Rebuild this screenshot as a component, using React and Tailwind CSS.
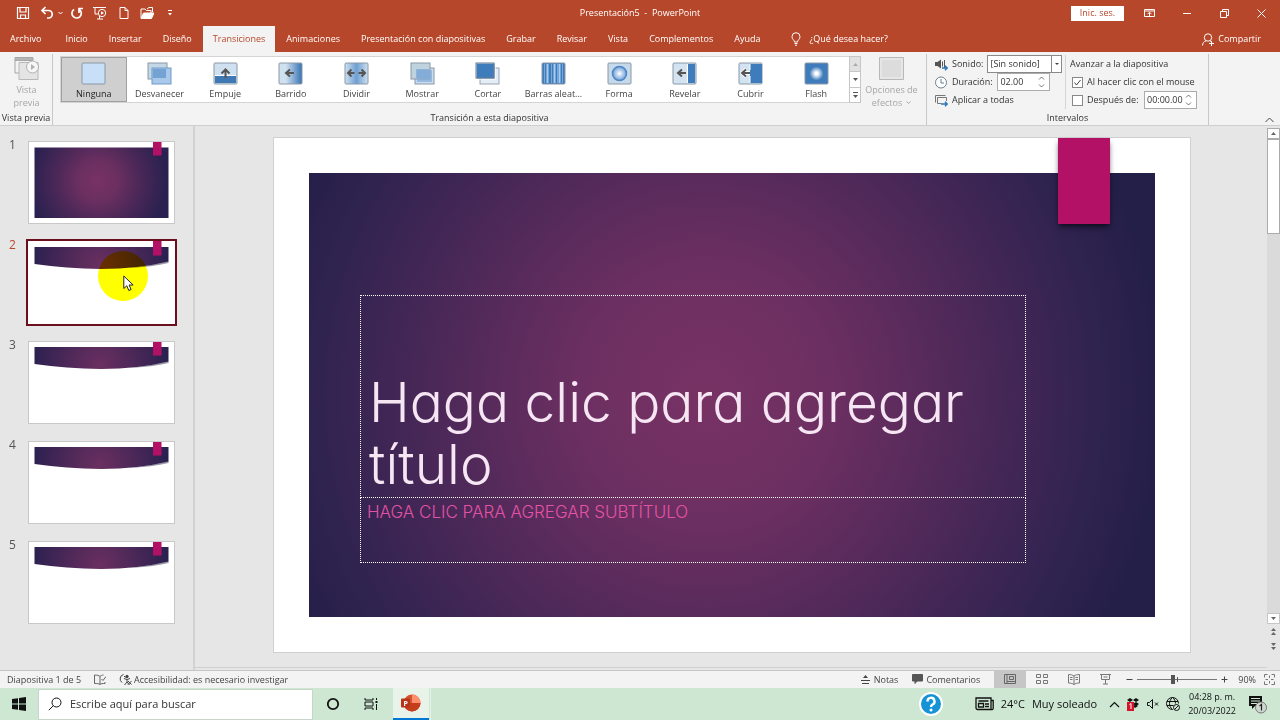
import { useState } from "react";

const tabs = [
  "Archivo", "Inicio", "Insertar", "Diseño", "Transiciones", "Animaciones",
  "Presentación con diapositivas", "Grabar", "Revisar", "Vista", "Complementos", "Ayuda",
];

const transitions = [
  "Ninguna", "Desvanecer", "Empuje", "Barrido", "Dividir", "Mostrar",
  "Cortar", "Barras aleat...", "Forma", "Revelar", "Cubrir", "Flash",
];

const Icon = ({ w, h, children, className = "" }) => (
  <svg width={w} height={h} viewBox={`0 0 ${w} ${h}`} fill="none" stroke="currentColor" className={`shrink-0 ${className}`} aria-hidden="true">
    {children}
  </svg>
);

const Frame = ({ fill }) => <rect x="1" y="1" width="23" height="21" rx="1" fill={fill} stroke="#8a98a6" />;
const ArrowLeft = ({ x = 0 }) => <path d={`M${x + 16} 11H${x + 9}M${x + 12} 7.500l-4 3.500 4 3.500`} stroke="#555" strokeWidth="2" />;

const TransitionIcon = ({ name }) => {
  switch (name) {
    case "Ninguna":
      return <Frame fill="#c8e0f7" />;
    case "Desvanecer":
      return (
        <>
          <rect x="1" y="1" width="19" height="16" fill="#c3d8e4" stroke="#8a98a6" />
          <rect x="5" y="6" width="19" height="16" fill="#a9c8ea" stroke="#6f9cc9" />
          <rect x="6" y="7" width="13" height="9" fill="#74a3d3" stroke="none" />
        </>
      );
    case "Empuje":
      return (
        <>
          <Frame fill="#cfe1f0" />
          <rect x="2" y="14" width="21" height="7" fill="#3f78b3" stroke="none" />
          <path d="M2 13.500h21" stroke="#fff" />
          <path d="M12.500 16V8M8.500 11.500l4-4 4 4" stroke="#555" strokeWidth="2" />
        </>
      );
    case "Barrido":
      return (
        <>
          <Frame fill="url(#wipe)" />
          <ArrowLeft />
        </>
      );
    case "Dividir":
      return (
        <>
          <Frame fill="url(#split)" />
          <path d="M4 11h6.500M7.500 7.500L4 11l3.500 3.500M14.500 11H21M17.500 7.500L21 11l-3.500 3.500" stroke="#555" strokeWidth="2" />
        </>
      );
    case "Mostrar":
      return (
        <>
          <rect x="5" y="6" width="19" height="16" fill="#cbdcf0" stroke="#8a98a6" />
          <rect x="1" y="1" width="19" height="16" fill="#bfd3df" stroke="#8a98a6" />
          <rect x="6" y="7" width="13" height="9" fill="#8fb3da" stroke="none" />
          <rect x="7" y="8" width="15" height="12" fill="#7ea9d8" fillOpacity=".7" stroke="none" />
        </>
      );
    case "Cortar":
      return (
        <>
          <rect x="5" y="6" width="19" height="16" fill="#e4ecf6" stroke="#9aa5b0" />
          <rect x="1" y="1" width="19" height="16" fill="#3f7cbc" stroke="#fff" />
          <rect x="1" y="1" width="18" height="15" stroke="#6c7f92" />
        </>
      );
    case "Barras aleat...":
      return (
        <>
          <Frame fill="#3f7cbc" />
          <path d="M6.500 2v19M13.500 2v19M18.500 2v19" stroke="#a9cdf0" strokeWidth="2" />
          <path d="M3.500 2v19M10.500 2v19M16.500 2v19M21.500 2v19" stroke="#76a8d8" />
        </>
      );
    case "Forma":
      return (
        <>
          <Frame fill="#c5d9ea" />
          <circle cx="12.500" cy="11.500" r="7" fill="url(#burst)" stroke="#4d86c4" strokeWidth="1.500" />
        </>
      );
    case "Revelar":
      return (
        <>
          <Frame fill="#d3e3f1" />
          <rect x="16" y="2" width="7" height="19" fill="#3f7cbc" stroke="none" />
          <path d="M15.500 2v19" stroke="#fff" />
          <ArrowLeft x={-2} />
        </>
      );
    case "Cubrir":
      return (
        <>
          <Frame fill="#d3e3f1" />
          <rect x="12" y="2" width="12" height="19" fill="#3f7cbc" stroke="none" />
          <path d="M12 2v6M12 14v7" stroke="#fff" />
          <path d="M12 11H5M8 7.500L4.500 11 8 14.500" stroke="#fff" strokeWidth="4" />
          <ArrowLeft x={-4} />
        </>
      );
    default:
      return (
        <>
          <Frame fill="#3f7cbc" />
          <circle cx="12.500" cy="11.500" r="7" fill="url(#flash)" stroke="none" />
        </>
      );
  }
};

const Gradients = () => (
  <svg width="0" height="0" className="absolute" aria-hidden="true">
    <defs>
      <linearGradient id="wipe"><stop offset=".3" stopColor="#cfe0ef" /><stop offset="1" stopColor="#3673b5" /></linearGradient>
      <linearGradient id="split"><stop offset="0" stopColor="#cfe0ef" /><stop offset=".5" stopColor="#6f9fd2" /><stop offset="1" stopColor="#cfe0ef" /></linearGradient>
      <radialGradient id="burst"><stop offset="0" stopColor="#fff" /><stop offset="1" stopColor="#6b9fd8" /></radialGradient>
      <radialGradient id="flash"><stop offset=".2" stopColor="#fff" /><stop offset="1" stopColor="#3f7cbc" /></radialGradient>
      <radialGradient id="slide" gradientUnits="userSpaceOnUse" cx="70" cy="0" r="68" gradientTransform="translate(0 40)"><stop offset="0" stopColor="#783264" /><stop offset=".3" stopColor="#6a2f60" /><stop offset=".6" stopColor="#4c2858" /><stop offset="1" stopColor="#2a2150" /></radialGradient>
      <radialGradient id="band" gradientUnits="userSpaceOnUse" cx="72" cy="24" r="68"><stop offset="0" stopColor="#6a2f60" /><stop offset=".5" stopColor="#4c2858" /><stop offset="1" stopColor="#2a2150" /></radialGradient>
    </defs>
  </svg>
);

const TitleBar = () => (
  <header className="grid h-[26px] grid-cols-[1fr_auto_1fr] items-center text-white">
    <div className="flex items-center pl-4">
      <button aria-label="Guardar"><Icon w={14} h={14}><path d="M1.500 1.500h11v11h-11z" strokeWidth="1.200" /><path d="M4 2v4h6V2M4.500 12V9h5V12" strokeWidth="1.200" /></Icon></button>
      <button aria-label="Deshacer" className="ml-2.5"><Icon w={14} h={14}><path d="M5.500 1L2 4.500 5.500 8M2 4.500h6.500a3.600 3.600 0 0 1 0 7.500H7" strokeWidth="1.700" /></Icon></button>
      <button aria-label="Más deshacer" className="ml-1"><Icon w={5} h={4}><path d="M.5 1l2 2 2-2" /></Icon></button>
      <button aria-label="Rehacer" className="ml-[7px]"><Icon w={14} h={14}><path d="M4 3.400a4.700 4.700 0 1 0 5.500.2M9 7V2.500h4" strokeWidth="1.700" /></Icon></button>
      <button aria-label="Presentar" className="ml-[9px]"><Icon w={15} h={14}><path d="M0 1.500h13M2 2v6h3M4 13h6M6.500 10v3" /><circle cx="9" cy="7" r="3.700" /><path d="M8 5.200v3.600L11 7z" fill="currentColor" stroke="none" /></Icon></button>
      <button aria-label="Nuevo" className="ml-[11px]"><Icon w={10} h={14}><path d="M1 1.500h5L9 4.500v8H1zM6 1.500v3h3" /></Icon></button>
      <button aria-label="Abrir" className="ml-[11px]"><Icon w={14} h={14}><path d="M1 12V3h4l1.500 1.500H11V7M7 3l2-1.500h3.500V6" /><path d="M1 12.500L3.500 7H14l-2.500 5.500z" fill="currentColor" /></Icon></button>
      <button aria-label="Personalizar" className="ml-[13px]"><Icon w={7} h={6}><path d="M1 .5h4" /><path d="M1 3h4L3 5.500z" fill="currentColor" stroke="none" /></Icon></button>
    </div>
    <h1 className="text-[9px] whitespace-pre">Presentación5  -  PowerPoint</h1>
    <div className="flex items-center justify-end pr-3.5">
      <button className="h-[15px] w-[53px] bg-white text-[9px] leading-3 text-[#b7472a]">Inic. ses.</button>
      <button aria-label="Opciones de la cinta" className="ml-5"><Icon w={12} h={10}><path d="M.5 1.500h10v7h-10zM.5 3h10M5.500 8V4.500M3.500 6.200l2-2 2 2" /></Icon></button>
      <button aria-label="Minimizar" className="ml-[26px]"><Icon w={10} h={10}><path d="M1 5.500h8" /></Icon></button>
      <button aria-label="Restaurar" className="ml-7"><Icon w={9} h={9}><path d="M.5 2.500h6v6h-6zM2.500 2.500v-2h6v6h-2" /></Icon></button>
      <button aria-label="Cerrar" className="ml-7"><Icon w={9} h={9}><path d="M.5.5l8 8M8.500.5l-8 8" /></Icon></button>
    </div>
  </header>
);

const Tabs = () => (
  <nav className="flex h-[26px] items-stretch gap-px text-[9px] font-medium text-white">
    {tabs.map((tab) => (
      <button key={tab} className={`px-2.5 whitespace-nowrap first:mr-[3px] ${tab === "Transiciones" ? "bg-[#f3f3f3] text-[#b7472a]" : ""}`}>{tab}</button>
    ))}
    <button className="ml-5 flex items-center gap-2 whitespace-nowrap">
      <Icon w={10} h={14}><path d="M3.500 10c0-2-2.500-2.500-2.500-5.300a4 4 0 0 1 8 0C9 7.500 6.500 8 6.500 10zM3.500 11.500h3M4 13.200h2" /></Icon>
      ¿Qué desea hacer?
    </button>
    <button className="ml-auto flex items-center gap-1 pr-[19px]">
      <Icon w={12} h={13}><circle cx="6" cy="4.500" r="3.700" /><path d="M.5 12.500C.5 10 2 8.500 4 7.800M8 7.800l1 .7M9.500 8v5M7 10.500h5" /></Icon>
      Compartir
    </button>
  </nav>
);

const GroupLabel = ({ children }) => <p className="mt-auto text-center text-[9px] leading-[14px] font-medium whitespace-nowrap text-[#333]">{children}</p>;

const Spinner = ({ id, defaultValue, label }) => (
  <span className="flex h-[18px] w-[53px] items-center border border-[#ababab] bg-white">
    <input id={id} aria-label={label} defaultValue={defaultValue} className="w-0 flex-1 pl-0.5 outline-none" />
    <Icon w={7} h={12} className="mr-1 text-[#777]"><path d="M1 3.500l2.500-2.500L6 3.500M1 8.500L3.500 11 6 8.500" /></Icon>
  </span>
);

const Ribbon = ({ selected, onSelect }) => (
  <section className="flex h-[74px] border-b border-[#cfcfcf] bg-[#f3f3f3] pt-0.5 text-[9px] text-[#444]">
    <div className="flex w-[53px] shrink-0 flex-col border-r border-[#c8c8c8]">
      <button disabled className="flex flex-col items-center pt-0.5 pl-px leading-[13px] text-[#a6a6a6]">
        <Icon w={26} h={25} className="mb-0.5">
          <path d="M1 1.500h18v3H1z" fill="#b5b5b5" /><path d="M1 4v13h4" />
          <path d="M5 6.500h19v17H5z" fill="#e4e4e4" stroke="#b8b8b8" />
          <circle cx="18.500" cy="11" r="6" fill="#f6f6f6" stroke="#b0b0b0" /><path d="M17 8v6l4-3z" fill="#b0b0b0" stroke="none" />
        </Icon>
        Vista<br />previa
      </button>
      <GroupLabel>Vista previa</GroupLabel>
    </div>

    <div className="flex min-w-0 flex-1 flex-col border-r border-[#c8c8c8]">
      <div className="flex items-start pt-0.5 pl-[7px]">
        <div className="grid flex-1 grid-cols-12 border-y border-l border-[#d4d4d4] bg-white">
          {transitions.map((name) => (
            <button
              key={name}
              onClick={() => onSelect(name)}
              className={`flex h-[45px] flex-col items-center border pt-1 leading-[14px] ${selected === name ? "border-[#a0a0a0] bg-[#cfcfcf] text-[#222]" : "border-transparent"}`}
            >
              <svg width="25" height="23" viewBox="0 0 25 23" fill="none" className="mb-0.5" aria-hidden="true"><TransitionIcon name={name} /></svg>
              <span className="whitespace-nowrap">{name}</span>
            </button>
          ))}
        </div>
        <div className="flex h-[47px] w-3 flex-col border border-[#c6c6c6] bg-white text-[#555]">
          <button aria-label="Fila anterior" className="flex flex-1 items-center justify-center bg-[#e1e1e1]"><Icon w={5} h={3}><path d="M0 3h5L2.500 0z" fill="#aaa" stroke="none" /></Icon></button>
          <button aria-label="Fila siguiente" className="flex flex-1 items-center justify-center border-y border-[#c6c6c6]"><Icon w={5} h={3}><path d="M0 0h5L2.500 3z" fill="#555" stroke="none" /></Icon></button>
          <button aria-label="Más transiciones" className="flex flex-1 items-center justify-center"><Icon w={5} h={6}><path d="M0 .5h5" /><path d="M0 3h5L2.500 6z" fill="#555" stroke="none" /></Icon></button>
        </div>
        <button disabled className="flex w-[65px] flex-col items-center pr-1 leading-[13px] text-[#a6a6a6]">
          <Icon w={26} h={24} className="mt-px mb-0.5"><path d="M.5.5h24v22H.5z" fill="#e6e6e6" stroke="#b8b8b8" /><path d="M3 3h19v17H3z" fill="#dcdcdc" stroke="none" /></Icon>
          <span className="whitespace-nowrap">Opciones de</span>
          <span className="flex items-center gap-1">efectos <Icon w={5} h={4}><path d="M.5.5l2 2 2-2" /></Icon></span>
        </button>
      </div>
      <GroupLabel>Transición a esta diapositiva</GroupLabel>
    </div>

    <div className="flex w-[282px] shrink-0 flex-col border-r border-[#c8c8c8] text-[#333]">
      <div className="flex pt-px pl-2 whitespace-nowrap">
        <div className="grid w-[131px] shrink-0 auto-rows-[18px] items-center border-r border-[#d4d4d4]">
          <div className="flex items-center gap-1">
            <Icon w={13} h={13} className="text-[#555]"><path d="M0 4h2.500L6 1.500v9L2.500 8H0z" fill="currentColor" stroke="none" /><path d="M7.500 3.500v5M9.500 2v8" /><path d="M7 10h5M10 7.800l2.200 2.200-2.200 2.200" stroke="#2e75b6" strokeWidth="1.400" /></Icon>
            <label htmlFor="sonido">Sonido:</label>
            <span className="mr-[3px] ml-auto flex h-[18px] w-[75px] items-stretch border border-[#8a8a8a] bg-white">
              <select id="sonido" className="w-0 flex-1 appearance-none pl-0.5 outline-none"><option>[Sin sonido]</option></select>
              <span className="pointer-events-none flex w-2.5 items-center justify-center border-l border-[#8a8a8a]"><Icon w={4} h={2}><path d="M0 0h4L2 2z" fill="#444" stroke="none" /></Icon></span>
            </span>
          </div>
          <div className="flex items-center gap-1">
            <Icon w={13} h={13}><circle cx="6" cy="6.500" r="5.500" fill="#fff" stroke="#6b7f94" /><path d="M6 3v4h3" stroke="#6b7f94" /></Icon>
            <label htmlFor="duracion">Duración:</label>
            <span className="mr-[15px] ml-auto"><Spinner id="duracion" defaultValue="02.00" /></span>
          </div>
          <button className="flex items-center gap-1">
            <Icon w={13} h={13}><path d="M.5 8.500v-7h10M2.500 3.500h9V7M2.500 3.500v6H6" stroke="#777" /><path d="M6 10h6M10 7.800l2.200 2.200-2.200 2.200" stroke="#2e75b6" strokeWidth="1.400" /></Icon>
            Aplicar a todas
          </button>
        </div>
        <div className="grid shrink-0 auto-rows-[18px] items-center pl-1">
          <p>Avanzar a la diapositiva</p>
          <label className="flex items-center gap-1 pl-0.5">
            <span className="relative flex">
              <input type="checkbox" defaultChecked className="peer size-[11px] appearance-none border border-[#888] bg-white" />
              <Icon w={11} h={11} className="pointer-events-none absolute hidden peer-checked:block"><path d="M2.500 5.500l2 2.500 4-5" stroke="#444" /></Icon>
            </span>
            Al hacer clic con el mouse
          </label>
          <div className="flex items-center pl-0.5">
            <label className="flex w-[72px] items-center gap-1">
              <input type="checkbox" className="size-[11px] appearance-none border border-[#888] bg-white" />
              Después de:
            </label>
            <Spinner label="Tiempo después de" defaultValue="00:00.00" />
          </div>
        </div>
      </div>
      <GroupLabel>Intervalos</GroupLabel>
    </div>
    <div className="flex w-[71px] shrink-0 items-end justify-end pr-1.5 pb-0.5">
      <button aria-label="Contraer la cinta"><Icon w={9} h={6}><path d="M.5 5l4-4 4 4" /></Icon></button>
    </div>
  </section>
);

const Thumbnail = ({ number, active }) => (
  <li className="relative flex items-start">
    <span className={`w-[28px] pl-[9px] text-xs leading-2 ${active ? "text-[#b7472a]" : "text-[#555]"}`}>{number}</span>
    <button aria-label={`Diapositiva ${number}`} className={`h-[83px] flex-1 bg-white ${active ? "outline-2 outline-[#6b0f1e]" : "outline -outline-offset-1 outline-[#c8c8c8]"}`}>
      <svg viewBox="0 0 147 83" className="size-full" aria-hidden="true">
        {number === 1 ? (
          <rect x="6.500" y="6.500" width="134" height="70.500" fill="url(#slide)" />
        ) : (
          <>
            <path d="M100 27Q122 25 140.500 20V22Q125 26 100 27z" fill="#9a9aa8" />
            <path d="M6.500 6H140.500V20.500Q110 28 73 28Q38 27.500 6.500 23z" fill="url(#band)" />
          </>
        )}
        <rect x="125" y="0" width="8.500" height="14.500" fill="#b31166" />
      </svg>
    </button>
    {active && (
      <>
        <span className="pointer-events-none absolute top-2.5 left-[98px] size-[50px] rounded-full bg-[#ffff00] mix-blend-multiply" />
        <svg width="12" height="18" viewBox="0 0 12 18" className="pointer-events-none absolute top-[34px] left-[123px]" aria-hidden="true">
          <path d="M.8 1v12.500l3-2.700 2 4.700 2.300-1-2-4.500h4z" fill="#fff" stroke="#222" />
        </svg>
      </>
    )}
  </li>
);

const Slide = () => (
  <div className="mb-0.5 min-w-0 flex-1 border-b border-[#cfcfcf] pt-[11px] pr-[76px] pl-[78px]">
    <article className="relative aspect-video border border-[#d0d0d0] bg-white p-[35px]">
      <div className="h-full bg-[radial-gradient(ellipse_50%_98%_at_47%_50%,#783264_0%,#6c2f61_30%,#4f2959_60%,#302350_92%,#241f48_108%)] pt-[122px] pr-[129px] pl-[51px] font-[Inter] font-light">
        <h2 className="flex h-[203px] items-end border border-dotted border-white px-2 pb-0.5 text-[55px] leading-[62px] text-[#f6e6f4] [font-feature-settings:'cv11']">Haga clic para agregar título</h2>
        <p className="h-[65px] border border-t-0 border-dotted border-white px-1.5 pt-0.5 text-[17px] leading-6 text-[#e352a5]">HAGA CLIC PARA AGREGAR SUBTÍTULO</p>
      </div>
      <div className="absolute top-0 right-20 h-[86px] w-[52px] bg-[#b31166] shadow-md shadow-black/50" />
    </article>
  </div>
);

const Scrollbar = () => (
  <div className="flex w-[13px] shrink-0 flex-col items-center pt-0.5 pb-5 text-[#555]">
    <button aria-label="Subir" className="flex h-[11px] w-full items-center justify-center border border-[#ababab] bg-white"><Icon w={5} h={3}><path d="M0 3h5L2.500 0z" fill="#666" stroke="none" /></Icon></button>
    <div className="w-full flex-1 bg-[#dadada]"><div className="h-[95px] border border-[#ababab] bg-white" /></div>
    <button aria-label="Bajar" className="flex h-[11px] w-full items-center justify-center border border-[#c6c6c6] bg-white"><Icon w={5} h={3}><path d="M0 0h5L2.500 3z" fill="#666" stroke="none" /></Icon></button>
    <button aria-label="Diapositiva anterior" className="mt-1"><Icon w={7} h={8}><path d="M3.500 0L6 3H1zM3.500 4L6 7H1z" fill="#666" stroke="none" /></Icon></button>
    <button aria-label="Diapositiva siguiente" className="mt-1.5"><Icon w={7} h={8}><path d="M3.500 4L6 1H1zM3.500 8L6 5H1z" fill="#666" stroke="none" /></Icon></button>
  </div>
);

const StatusBar = () => (
  <footer className="flex h-[18px] items-center border-t border-[#c6c6c6] bg-[#f3f3f3] pl-[7px] text-[9px] whitespace-nowrap text-[#444]">
    <span className="w-[87px]">Diapositiva 1 de 5</span>
    <button aria-label="Ortografía"><Icon w={12} h={11} className="text-[#666]"><path d="M6 2.500v8M6 2.500C5 1.500 3 1 .5 1v8.500C3 9.500 5 9.500 6 10.500 7 9.500 8.500 9.500 11 9.500V8M6 2.500C7 1.500 8 1 9.500 1M7.500 5l1.500 1.500L12 2.500" /></Icon></button>
    <button className="ml-[13px] flex items-center gap-0.5">
      <Icon w={13} h={13}><path d="M4.500 1.500A4.500 4.500 0 0 0 3 9.500M5 3l1.500 1.500M5 5.500l3 1 3-1M8 6.500V9l-2.500 3M8 9l2.500 3M9 8l3.500 3.500M12.500 8L9 11.500" /><circle cx="8" cy="3.500" r="1.200" fill="currentColor" /></Icon>
      Accesibilidad: es necesario investigar
    </button>
    <button className="ml-auto flex items-center gap-1"><Icon w={9} h={10}><path d="M0 5.500h9M1 8.500h7" /><path d="M4.500 0L7 3H2z" fill="currentColor" stroke="none" /></Icon>Notas</button>
    <button className="ml-3.5 flex items-center gap-0.5"><Icon w={12} h={11}><path d="M.5.5h10v6.500H5L3 9.500V7H.5z" fill="#555" stroke="#555" /></Icon>Comentarios</button>
    <div className="ml-3.5 flex h-full items-center text-[#777]">
      <button aria-label="Normal" className="flex h-full w-8 items-center justify-center bg-[#c6c6c6] text-[#666]"><Icon w={12} h={11}><path d="M.5.5h11v9H.5zM3 1v8M3 7.500h8M5.500 2.500h4v3h-4z" /></Icon></button>
      <button aria-label="Clasificador" className="flex w-8 justify-center"><Icon w={12} h={11}><path d="M.5.5h4v3h-4zM7.500.5h4v3h-4zM.5 6.500h4v3h-4zM7.500 6.500h4v3h-4z" /></Icon></button>
      <button aria-label="Lectura" className="flex w-8 justify-center"><Icon w={12} h={11}><path d="M6 2v8.500M6 2C4.500 1 3 .5.500.5v8.500c2 0 4 .5 5.500 1.500C7.500 9.500 9 9 11.500 9V.5C9 .5 7.500 1 6 2M2 3.500h2.500M2 5.500h2.500M7.500 3.500H10M7.500 5.500H10" /></Icon></button>
      <button aria-label="Presentación" className="flex w-8 justify-center"><Icon w={12} h={11}><path d="M0 .5h11M1.500.5v5h8v-5M5.500 6v4M3 10h5M3.500 3h4" /></Icon></button>
    </div>
    <button aria-label="Alejar" className="ml-1"><Icon w={7} h={7}><path d="M.5 3.500h6" /></Icon></button>
    <span className="relative mx-1 flex">
      <input
        type="range" min="10" max="170" defaultValue="80" aria-label="Zoom"
        className="h-[9px] w-20 appearance-none bg-[linear-gradient(#777,#777)] bg-[length:100%_1px] bg-center bg-no-repeat [&::-webkit-slider-thumb]:h-[9px] [&::-webkit-slider-thumb]:w-1 [&::-webkit-slider-thumb]:appearance-none [&::-webkit-slider-thumb]:bg-[#555]"
      />
      <span className="absolute top-0.5 left-10 h-[5px] w-px bg-[#555]" />
    </span>
    <button aria-label="Acercar"><Icon w={7} h={7}><path d="M.5 3.500h6M3.500.5v6" /></Icon></button>
    <button className="ml-2.5">90%</button>
    <button aria-label="Ajustar" className="mr-[5px] ml-2 text-[#777]"><Icon w={11} h={11}><path d="M.5 3.500v-3h3M7.500.5h3v3M10.500 7.500v3h-3M3.500 10.500h-3v-3M5.500 1.500V4M5.500 7v2.500M1.500 5.500H4M7 5.500h2.500" /></Icon></button>
  </footer>
);

const Taskbar = () => (
  <div className="flex h-8 items-center bg-[#cde7d2] text-[#111]">
    <button aria-label="Inicio" className="flex w-[38px] justify-center"><Icon w={14} h={14}><path d="M0 2l6-.8v5.400H0zM7 1l7-1v6.600H7zM0 7.500h6v5.300L0 12zM7 7.500h7V14l-7-1z" fill="#111" stroke="none" /></Icon></button>
    <label className="flex h-[31px] w-[275px] items-center gap-2 border border-[#c8d6ca] bg-white px-[9px]">
      <Icon w={14} h={14}><circle cx="8.500" cy="5.500" r="4.500" /><path d="M5.300 8.700L.8 13.200" /></Icon>
      <input type="search" aria-label="Buscar" placeholder="Escribe aquí para buscar" className="min-w-0 flex-1 text-[11px] outline-none placeholder:text-[#333]" />
    </label>
    <button aria-label="Cortana" className="flex w-[39px] justify-center"><Icon w={14} h={14}><circle cx="7" cy="7" r="5.200" strokeWidth="1.800" /></Icon></button>
    <button aria-label="Vista de tareas" className="flex w-[41px] justify-center pr-1"><Icon w={14} h={14}><path d="M1 1v2h8V1M1 13v-2h8v2M1 5h8v4H1zM12.500 1v2M12.500 7v6" /><path d="M11.500 4h2v2h-2z" fill="#111" stroke="none" /></Icon></button>
    <button aria-label="PowerPoint" className="flex h-full w-[36px] items-center justify-center border-b-2 border-[#0078d4] bg-[#e8f4ea]">
      <svg width="20" height="18" viewBox="0 0 20 18" aria-hidden="true">
        <circle cx="11" cy="9" r="8.500" fill="#d35230" /><path d="M11 .5a8.500 8.500 0 0 1 8.500 8.500H11z" fill="#ff8f6b" /><path d="M2.500 9h17a8.500 8.500 0 0 1-17 0z" fill="#c43e1c" />
        <rect x="0" y="4.500" width="9" height="9" rx="1" fill="#b7341a" /><text x="2.500" y="11.500" fontSize="7" fontWeight="700" fill="#fff">P</text>
      </svg>
    </button>
    <div className="ml-px h-full w-px bg-[#e8f4ea]" />
    <div className="ml-auto flex items-center whitespace-nowrap">
      <button aria-label="Ayuda">
        <svg width="24" height="24" viewBox="0 0 24 24" aria-hidden="true"><circle cx="12" cy="12" r="11" fill="#1693d6" stroke="#fff" strokeWidth="2" /><path d="M8.500 9.500a3.500 3.500 0 1 1 5 3C12.300 13.200 12 13.600 12 15" fill="none" stroke="#fff" strokeWidth="2.400" /><circle cx="12" cy="18" r="1.500" fill="#fff" /></svg>
      </button>
      <button className="ml-8 flex items-center gap-[7px] text-[11px]">
        <Icon w={19} h={14}><path d="M1 1h15v11.500H2.500A1.500 1.500 0 0 1 1 11zM16 3.500h2.200V11a1.500 1.500 0 0 1-2.200 1.500M3.500 4h10M10 7h4M10 9.500h4" strokeWidth="1.300" /><path d="M3.500 6.500h5v3.500h-5z" strokeWidth="1.300" /></Icon>
        <span>24°C</span><span>Muy soleado</span>
      </button>
      <button aria-label="Iconos ocultos" className="ml-3"><Icon w={11} h={7}><path d="M1 6l4.500-4.500L10 6" strokeWidth="1.200" /></Icon></button>
      <button aria-label="Dropbox" className="ml-1.5">
        <svg width="14" height="13" viewBox="0 0 14 13" aria-hidden="true"><path d="M4 0l3 2-3 2-3-2zM10 0l3 2-3 2-3-2zM4 4l3 2-3 2-3-2zM10 4l3 2-3 2-3-2zM7 8l3-1.500L12 8 9 10z" fill="#111" /><rect x="1" y="4" width="7" height="9" fill="#d5132b" /><path d="M3.500 6.500l1.500-1V11" fill="none" stroke="#fff" /></svg>
      </button>
      <button aria-label="Volumen" className="ml-[7px]"><Icon w={12} h={12}><path d="M.5 4.500H2.500L5.500 1.500v9l-3-3h-2zM8 4.500l3 3M11 4.500l-3 3" /></Icon></button>
      <button aria-label="Red" className="ml-[7px]"><Icon w={14} h={14}><path d="M12.500 6.500a6 6 0 1 0-6 6M6.500.5c-4 3.500-4 8.500 0 12M6.500.5c2 1.600 3 3.500 3 6M1 4.500h11M1 8.500h6.500" /><circle cx="10.500" cy="10.500" r="3" /><path d="M8.500 12.500l4-4" /></Icon></button>
      <time className="ml-2 text-center text-[9px] leading-[14px]">04:28 p. m.<br />20/03/2022</time>
      <button aria-label="Notificaciones" className="mx-3">
        <svg width="20" height="19" viewBox="0 0 20 19" aria-hidden="true"><path d="M1 1h13v10H7l-3 3v-3H1z" fill="#111" /><path d="M3 3.500h9M3 6h9M3 8.500h6" stroke="#cde7d2" /><circle cx="13" cy="12.500" r="5.500" fill="#cfd8d0" stroke="#777" /><path d="M11.500 11l2-1.500V15.500" fill="none" stroke="#222" strokeWidth="1.200" /></svg>
      </button>
    </div>
  </div>
);

const App = () => {
  const [selected, setSelected] = useState("Ninguna");

  return (
    <div className="flex min-h-screen flex-col bg-[#e6e6e6] font-['Open_Sans',sans-serif]">
      <Gradients />
      <div className="bg-[#b7472a]">
        <TitleBar />
        <Tabs />
      </div>
      <Ribbon selected={selected} onSelect={setSelected} />
      <main className="flex flex-1">
        <aside className="w-[195px] shrink-0 border-r-2 border-[#d2d2d2] pt-[15px] pr-[18px]">
          <ul className="flex flex-col gap-[17px]">
            {[1, 2, 3, 4, 5].map((n) => <Thumbnail key={n} number={n} active={n === 2} />)}
          </ul>
        </aside>
        <Slide />
        <Scrollbar />
      </main>
      <StatusBar />
      <Taskbar />
    </div>
  );
};

export default App;
